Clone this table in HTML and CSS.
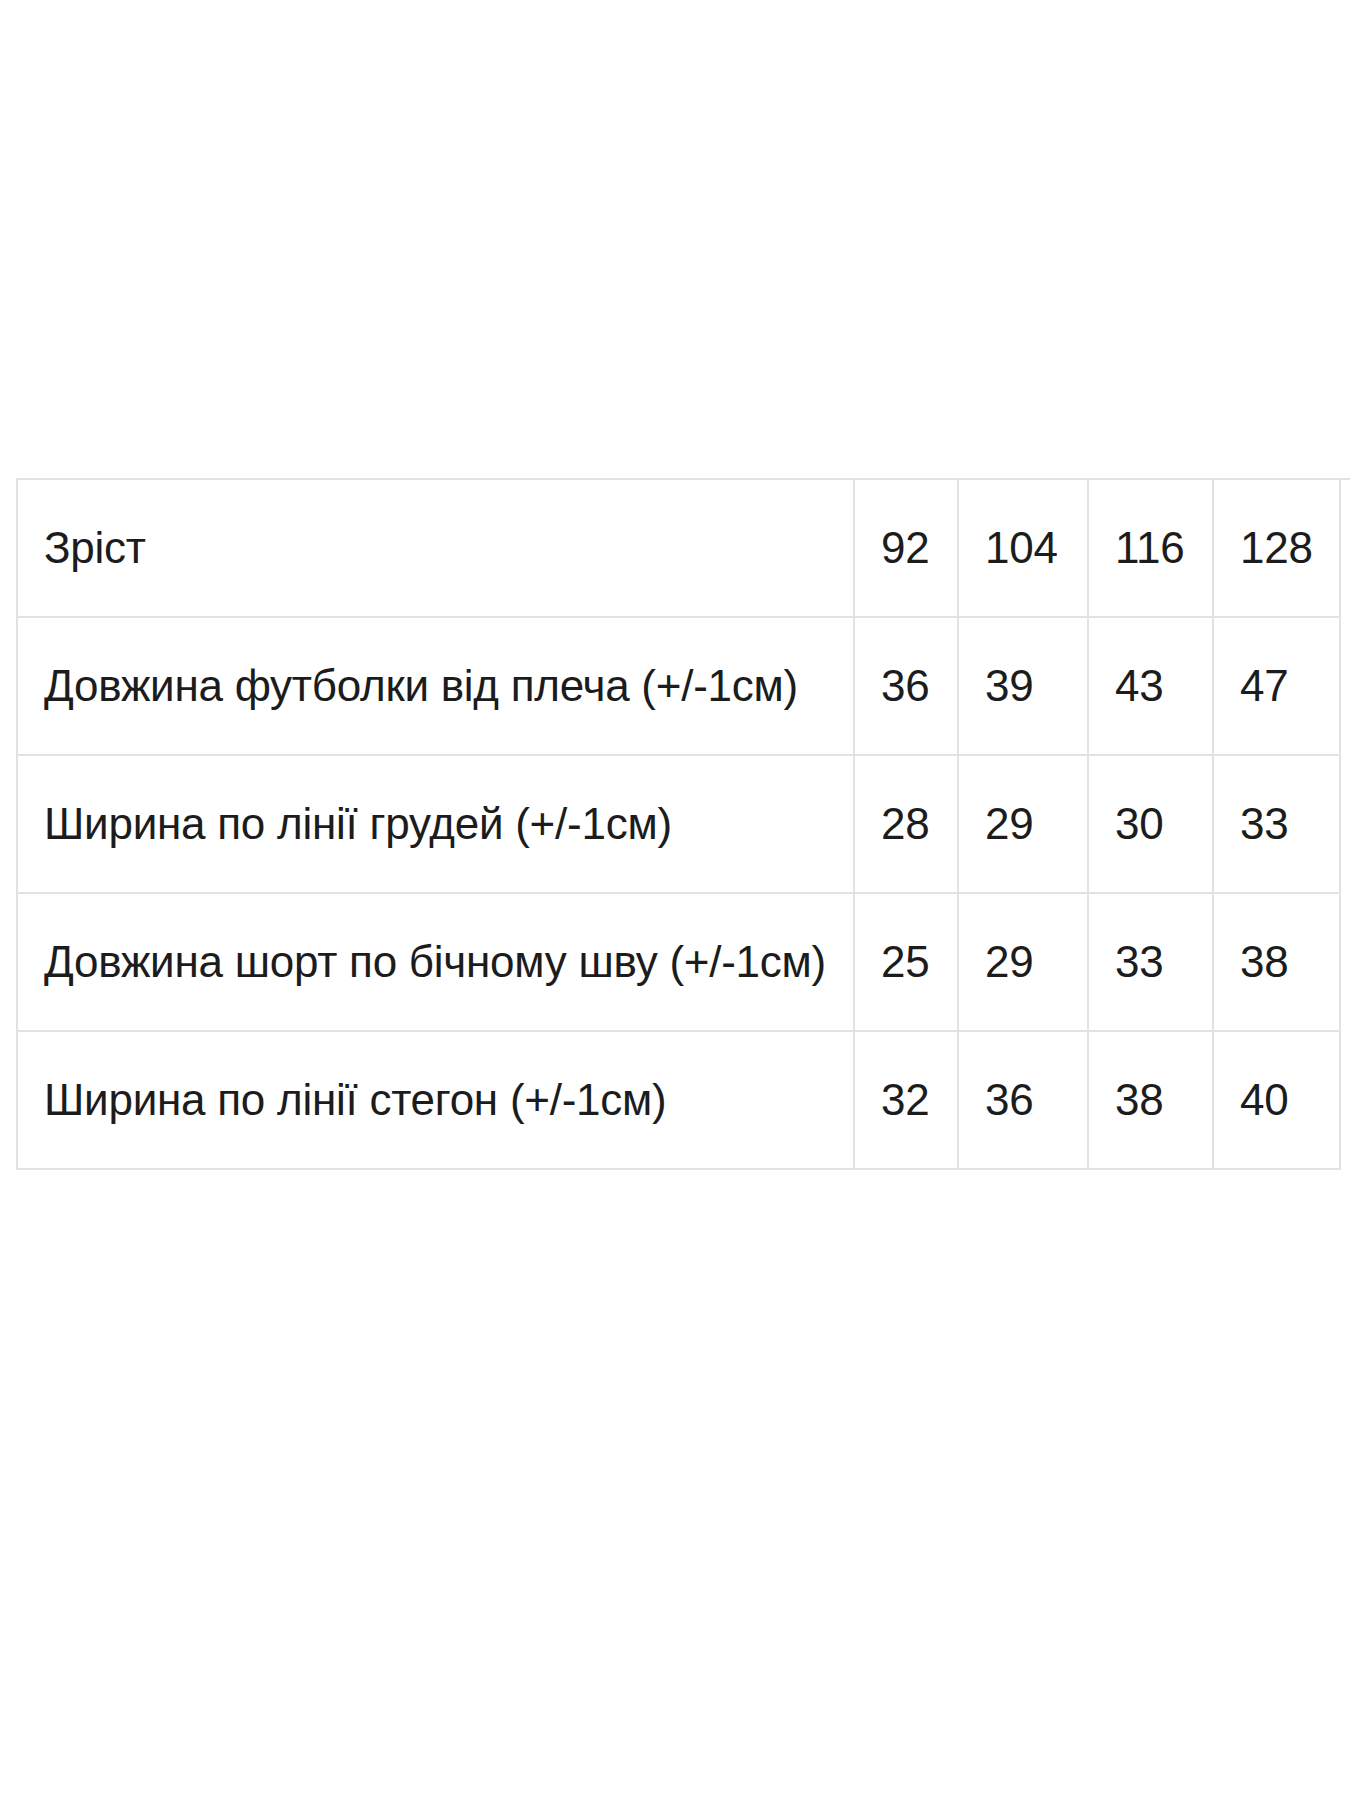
FILE: index.html
```html
<!DOCTYPE html>
<html lang="uk">
<head>
<meta charset="utf-8">
<title>Розмірна сітка</title>
<link rel="stylesheet" href="styles.css">
</head>
<body>
<main class="page">
  <section class="sheet">
    <div class="grid">
      <div class="cell name">Зріст</div>
      <div class="cell">92</div>
      <div class="cell">104</div>
      <div class="cell">116</div>
      <div class="cell">128</div>

      <div class="cell name">Довжина футболки від плеча (+/-1см)</div>
      <div class="cell">36</div>
      <div class="cell">39</div>
      <div class="cell">43</div>
      <div class="cell">47</div>

      <div class="cell name">Ширина по лінії грудей (+/-1см)</div>
      <div class="cell">28</div>
      <div class="cell">29</div>
      <div class="cell">30</div>
      <div class="cell">33</div>

      <div class="cell name">Довжина шорт по бічному шву (+/-1см)</div>
      <div class="cell">25</div>
      <div class="cell">29</div>
      <div class="cell">33</div>
      <div class="cell">38</div>

      <div class="cell name">Ширина по лінії стегон (+/-1см)</div>
      <div class="cell">32</div>
      <div class="cell">36</div>
      <div class="cell">38</div>
      <div class="cell">40</div>
    </div>
  </section>
</main>
</body>
</html>
```

FILE: styles.css
```css
html, body {
  margin: 0;
  padding: 0;
  background: #ffffff;
}

.page {
  width: 1350px;
  min-height: 1800px;
  padding-top: 478px;
  padding-left: 16px;
  box-sizing: border-box;
  font-family: "Liberation Sans", Arial, sans-serif;
  color: #1c1c1c;
}

.sheet {
  border-top: 2px solid #e2e2e2;
}

.grid {
  display: grid;
  grid-template-columns: 837px 104px 130px 125px 127px;
  grid-auto-rows: 138px;
  width: max-content;
  border-left: 2px solid #e2e2e2;
}

.cell {
  box-sizing: border-box;
  display: flex;
  align-items: center;
  padding-left: 26px;
  font-size: 44px;
  letter-spacing: -0.25px;
  line-height: 1;
  white-space: nowrap;
  border-right: 2px solid #e2e2e2;
  border-bottom: 2px solid #e2e2e2;
}
```
